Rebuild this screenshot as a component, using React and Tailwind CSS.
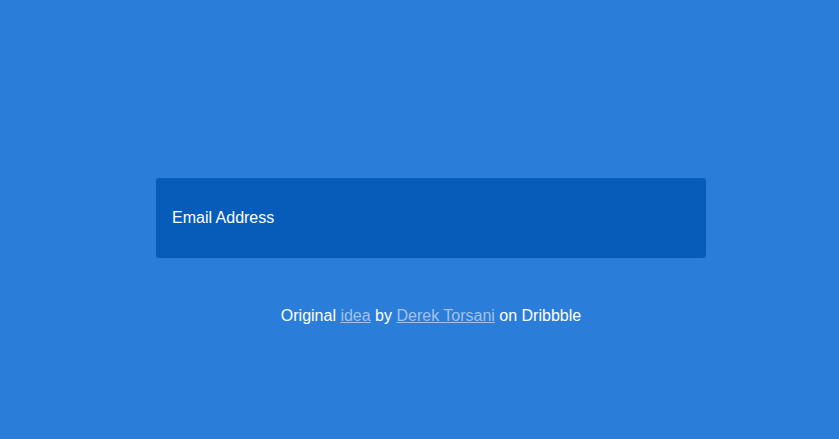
export default function App() {
  return (
    <div
      className="min-h-[439px] w-full bg-[#2a7dd8] flex flex-col items-center pl-[23px]"
      style={{ fontFamily: '"Liberation Sans", Arial, sans-serif' }}
    >
      <div className="mt-[178px] w-[550px] h-[80px] rounded-[3px] bg-[#075bb9] flex items-center px-[16px]">
        <input
          type="email"
          placeholder="Email Address"
          className="w-full bg-transparent outline-none text-[16px] text-white placeholder:text-white"
        />
      </div>
      <p className="mt-[48px] text-[16px] leading-[20px] text-white">
        Original <a href="#" className="underline text-[#a3c1e8]">idea</a> by{" "}
        <a href="#" className="underline text-[#a3c1e8]">Derek Torsani</a> on Dribbble
      </p>
    </div>
  );
}
